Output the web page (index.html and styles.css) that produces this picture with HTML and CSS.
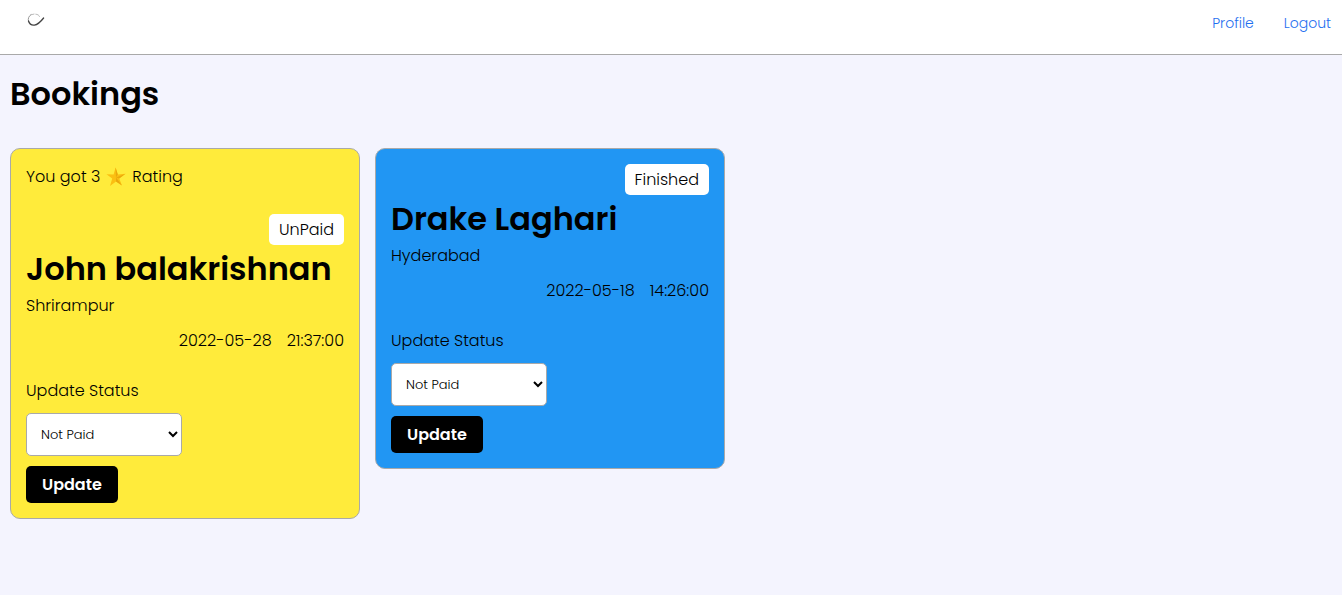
FILE: index.html
```html
<!DOCTYPE html>
<html lang="en">
<head>
<meta charset="utf-8">
<meta name="viewport" content="width=device-width, initial-scale=1">
<title>Bookings</title>
<link rel="stylesheet" href="styles.css">
</head>
<body>
<header class="topbar">
  <a class="logo" href="#" aria-label="Home">
    <svg width="20" height="16" viewBox="0 -1 20 16" fill="none" stroke-linecap="round">
      <path d="M5 2.7C2.7 4.1 1.7 6.7 2.5 9" stroke="#999" stroke-width="1"/>
      <path d="M2.5 9C3.4 12 5.5 13.4 8.4 13.1C12 12.6 14.8 9.6 17.6 6" stroke="#444" stroke-width="1.3"/>
      <path d="M4.8 2.8L8 2.1M9.8 2.2C11.8 2.4 13 3.1 13.5 4.5" stroke="#aaa" stroke-width="0.8"/>
    </svg>
  </a>
  <nav class="nav">
    <a href="#">Profile</a>
    <a href="#">Logout</a>
  </nav>
</header>
<main class="page">
  <h1 class="title">Bookings</h1>
  <section class="cards">
    <article class="card card-unpaid">
      <p class="rating">You got 3
        <svg class="star" width="20" height="20" viewBox="0 0 20 20" role="img" aria-label="star">
          <path fill="#fbbf12" d="M9.6 0.5L11.8 7.5L19.5 6.8L13.2 11.4L16 18.6L10 14.4L4 19L6.2 11.6L0.5 7.2L7.6 7.5Z"/>
          <path fill="#eaa80c" d="M9.6 0.5L11.8 7.5L10 10.6ZM19.5 6.8L13.2 11.4L10 10.6ZM16 18.6L10 14.4V10.6Z"/>
        </svg>
        Rating</p>
      <span class="badge">UnPaid</span>
      <h2 class="name">John balakrishnan</h2>
      <p>Shrirampur</p>
      <p class="when"><span>2022-05-28</span><span>21:37:00</span></p>
      <form class="status">
        <label for="status-1">Update Status</label>
        <select id="status-1"><option>Not Paid</option><option>Paid</option><option>Finished</option></select>
        <button type="button">Update</button>
      </form>
    </article>
    <article class="card card-finished">
      <span class="badge">Finished</span>
      <h2 class="name">Drake Laghari</h2>
      <p>Hyderabad</p>
      <p class="when"><span>2022-05-18</span><span>14:26:00</span></p>
      <form class="status">
        <label for="status-2">Update Status</label>
        <select id="status-2"><option>Not Paid</option><option>Paid</option><option>Finished</option></select>
        <button type="button">Update</button>
      </form>
    </article>
  </section>
</main>
</body>
</html>
```
FILE: styles.css
```css
* {
  box-sizing: border-box;
  margin: 0;
  padding: 0;
  font-family: Poppins, Inter, sans-serif;
}
body {
  background: #f4f4fe;
  color: #000;
  font-size: 16px;
  font-weight: 300;
  line-height: 25px;
}
.topbar {
  display: flex;
  justify-content: space-between;
  align-items: flex-start;
  padding: 11px 11px 18px 26px;
  background: #fff;
  border-bottom: 1px solid #a9a9a9;
}
.logo svg {
  display: block;
}
.nav {
  display: flex;
  gap: 30px;
}
.nav a {
  color: #1f6ff0;
  font-size: 14px;
  text-decoration: none;
}
.page {
  padding: 15px 10px;
}
.title,
.name {
  font-size: 32px;
  font-weight: 600;
  line-height: 48px;
}
.title {
  margin-bottom: 30px;
}
.cards {
  display: flex;
  flex-wrap: wrap;
  align-items: flex-start;
  gap: 15px;
}
.card {
  display: flex;
  flex-direction: column;
  width: 350px;
  max-width: 100%;
  padding: 15px;
  border: 1px solid #a9a9a9;
  border-radius: 10px;
}
.card-unpaid {
  background: #ffeb3b;
}
.card-finished {
  background: #2196f3;
}
.rating {
  display: flex;
  align-items: center;
  gap: 6px;
  margin-bottom: 25px;
}
.badge {
  align-self: flex-end;
  padding: 3px 10px;
  background: #fff;
  border-radius: 5px;
}
.when {
  display: flex;
  justify-content: flex-end;
  gap: 15px;
  margin: 10px 0 25px;
}
.status {
  display: flex;
  flex-direction: column;
  align-items: flex-start;
  gap: 10px;
}
.status select {
  width: 156px;
  height: 43px;
  padding: 10px;
  background: #fff;
  border: 1px solid #a9a9a9;
  border-radius: 5px;
  color: #000;
  font-size: 13px;
  font-weight: 300;
}
.status button {
  padding: 6px 16px;
  background: #000;
  border: 0;
  border-radius: 5px;
  color: #fff;
  font-size: 16px;
  font-weight: 600;
  line-height: 25px;
}
```
